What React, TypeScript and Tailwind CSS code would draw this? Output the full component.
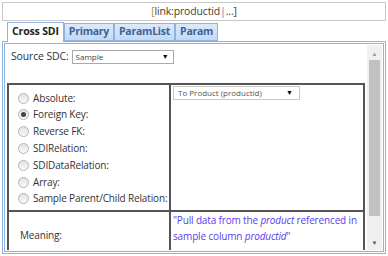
import { useState } from "react";

const options = [
  "Absolute:",
  "Foreign Key:",
  "Reverse FK:",
  "SDIRelation:",
  "SDIDataRelation:",
  "Array:",
  "Sample Parent/Child Relation:",
];

const tabs = ["Cross SDI", "Primary", "ParamList", "Param"];

const Radio = ({ checked }: { checked: boolean }) => (
  <span className="inline-flex h-[11px] w-[11px] shrink-0 items-center justify-center rounded-full border border-[#b5b5b5] bg-gradient-to-b from-[#e2e2e2] to-[#fafafa]">
    {checked && <span className="h-[5px] w-[5px] rounded-full bg-[#444]" />}
  </span>
);

const App = () => {
  const [selected] = useState(1);
  return (
    <div
      className="relative h-[256px] w-[388px] overflow-hidden bg-white text-[10px] tracking-[-0.15px] text-[#333]"
      style={{ fontFamily: '"Open Sans", "Liberation Sans", sans-serif' }}
    >
      <div className="mx-[2px] mt-[2px] flex h-[19px] items-center justify-center border border-[#c8c8c8] text-[10.5px] text-[#4a4030]">
        <span className="text-[#c98a10]">[</span>link:productid<span className="text-[#5b7bbf]">|</span>...]
      </div>

      <div className="mx-[2px] mt-[1px] flex flex-col">
        <div className="relative z-10 flex pl-[5px]">
          {tabs.map((t, i) => (
            <div
              key={t}
              className={
                i === 0
                  ? "flex h-[20px] items-center border border-b-0 border-[#8fb3e0] bg-white px-[4px] pb-[1px] text-[10.5px] font-bold text-[#222]"
                  : "mt-[1px] flex h-[18px] items-center border border-[#8fb3e0] bg-gradient-to-b from-[#dde9f8] to-[#c4d9f3] px-[4px] text-[10.5px] font-bold tracking-[-0.25px] text-[#3d6198]"
              }
            >
              {t}
            </div>
          ))}
        </div>
        <div className="-mt-[1px] h-[213px] border-[3px] border-double border-[#8fb3e0] p-[1px]">
          <div className="flex h-full">
            <div className="flex-1 overflow-hidden pl-[1px] pt-[4px]">
              <div className="flex items-center">
                <span className="ml-[4px] text-[10.5px]">Source SDC:</span>
                <div className="ml-[3px] flex h-[14px] w-[102px] items-center justify-between border border-[#a9a9a9] bg-white pl-[3px] pr-[4px] text-[8px] tracking-normal text-[#444]">
                  <span>Sample</span>
                  <span className="text-[7px] text-black">▼</span>
                </div>
              </div>

              <div className="mt-[18px] flex w-[358px] flex-col border-2 border-b-0 border-[#555]">
                <div className="flex">
                  <div className="w-[162px] shrink-0 border-r-2 border-[#555] pb-[3px] pl-[9px] pt-[5px]">
                    {options.map((o, i) => (
                      <div key={o} className="flex h-[16.8px] items-center gap-[4px] whitespace-nowrap">
                        <Radio checked={i === selected} />
                        <span>{o}</span>
                      </div>
                    ))}
                  </div>
                  <div className="flex-1 pl-[2px] pt-[1px]">
                    <div className="flex h-[14px] w-[127px] items-center justify-between border border-[#c8c8c8] bg-white pl-[4px] pr-[6px] text-[8px] tracking-normal text-[#555]">
                      <span>To Product (productid)</span>
                      <span className="text-[7px] text-black">▼</span>
                    </div>
                  </div>
                </div>
                <div className="flex border-t-2 border-[#555]">
                  <div className="h-[44px] w-[162px] shrink-0 border-r-2 border-[#555] pl-[11px] pt-[15px] leading-[16px]">
                    Meaning:
                  </div>
                  <div className="flex-1 pl-[2px] pr-[1px] leading-[16px] text-[#5a3cf0]">
                    "Pull data from the <i>product</i> referenced in sample column <i>productid</i>"
                  </div>
                </div>
              </div>
            </div>
            <div className="flex w-[15px] flex-col bg-[#f0f0f0] pb-[2px] pt-[4px]">
              <div className="flex h-[10px] items-center justify-center text-[6px] text-[#999]">▲</div>
              <div className="mx-[2px] mt-[1px] h-[156px] bg-[#c1c1c1]" />
              <div className="flex-1" />
              <div className="flex h-[10px] items-center justify-center text-[6px] text-[#555]">▼</div>
            </div>
          </div>
        </div>
      </div>
    </div>
  );
};

export default App;
